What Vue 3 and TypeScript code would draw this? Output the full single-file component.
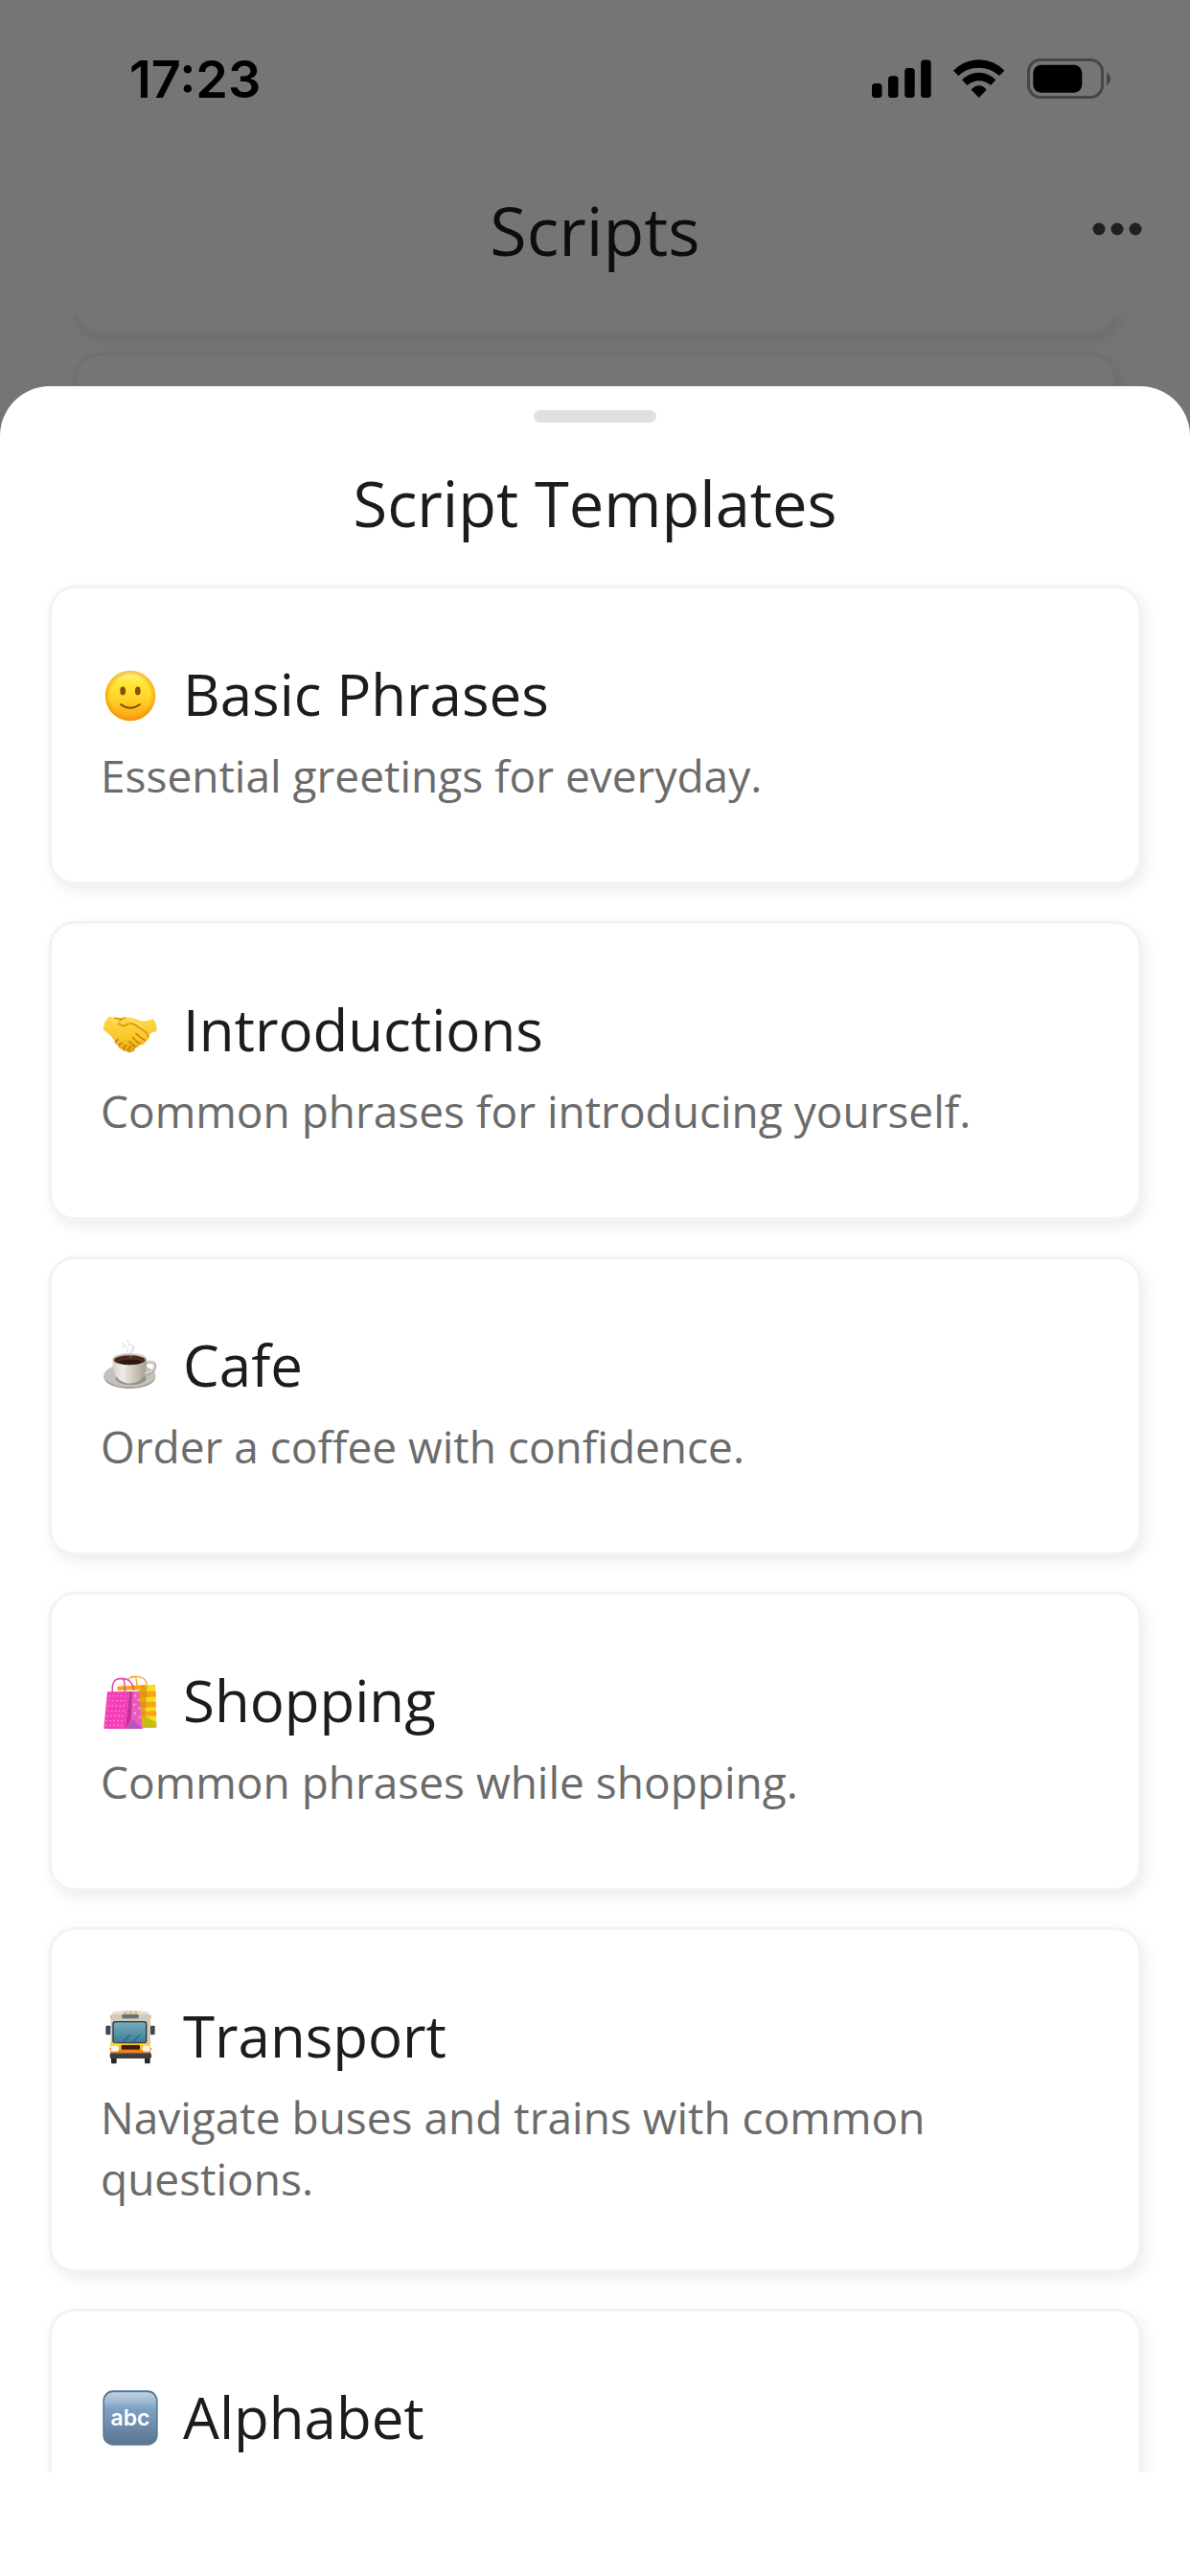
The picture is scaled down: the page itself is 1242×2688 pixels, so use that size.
<script setup lang="ts">
type IconName = 'smile' | 'handshake' | 'coffee' | 'bags' | 'bus' | 'abc'

interface ScriptTemplate {
  icon: IconName
  title: string
  description?: string
}

const templates: ScriptTemplate[] = [
  { icon: 'smile', title: 'Basic Phrases', description: 'Essential greetings for everyday.' },
  { icon: 'handshake', title: 'Introductions', description: 'Common phrases for introducing yourself.' },
  { icon: 'coffee', title: 'Cafe', description: 'Order a coffee with confidence.' },
  { icon: 'bags', title: 'Shopping', description: 'Common phrases while shopping.' },
  { icon: 'bus', title: 'Transport', description: 'Navigate buses and trains with common questions.' },
  { icon: 'abc', title: 'Alphabet' },
]
</script>

<template>
  <div class="screen">
    <div class="page">
      <header class="app-bar">
        <h1 class="app-title">Scripts</h1>
        <button class="more" type="button" aria-label="More options">
          <svg width="52" height="14" viewBox="0 0 52 14" fill="#49454f" aria-hidden="true">
            <circle cx="7" cy="7" r="6.5" />
            <circle cx="26" cy="7" r="6.5" />
            <circle cx="45" cy="7" r="6.5" />
          </svg>
        </button>
      </header>
      <div class="page-list">
        <div class="card page-card page-card-last"></div>
        <div class="card page-card"></div>
      </div>
    </div>

    <div class="scrim">
      <div class="status-bar">
        <span class="clock">17:23</span>
        <span class="indicators">
          <svg width="62" height="42" viewBox="908.5 61 62 42" aria-hidden="true">
            <rect x="908.5" y="87" width="10.5" height="15" rx="3.5" />
            <rect x="925.5" y="79.3" width="10.5" height="22.7" rx="3.5" />
            <rect x="942.7" y="71" width="10.5" height="31" rx="3.5" />
            <rect x="959.6" y="62.5" width="10.6" height="39.5" rx="3.5" />
          </svg>
          <svg width="54" height="42" viewBox="342 63 162 126" aria-hidden="true">
            <path d="M342 101Q376 67 422 67Q468 67 502 101L486 117Q458 92 422 92Q386 92 358 117Z" />
            <path d="M369 130Q392 107 422 107Q452 107 475 130L459 147Q443 133 422 133Q401 133 385 147Z" />
            <path d="M398 161Q408 148 422 148Q436 148 446 161L422 186Z" />
          </svg>
          <svg width="88" height="42" viewBox="1071 61 88 42" aria-hidden="true">
            <rect x="1072.5" y="62.5" width="77" height="39" rx="12.5" fill="none" stroke="#464646" stroke-width="3" />
            <rect x="1077.3" y="67.8" width="51" height="29" rx="8.5" />
            <path d="M1154 75.5Q1158 78 1158 82.2Q1158 86.5 1154 89Z" fill="#464646" />
          </svg>
        </span>
      </div>

      <section class="sheet" role="dialog" aria-labelledby="sheet-title">
        <div class="handle"></div>
        <h2 id="sheet-title" class="sheet-title">Script Templates</h2>
        <div class="template-list">
          <button v-for="item in templates" :key="item.title" class="card template-card" type="button">
            <span class="template-title">
              <svg v-if="item.icon === 'smile'" class="emoji" viewBox="0 0 60 60" aria-hidden="true">
                <defs>
                  <linearGradient id="face" x1="0" y1="0" x2="0" y2="1">
                    <stop offset="0" stop-color="#fff8a8" />
                    <stop offset=".22" stop-color="#ffe93c" />
                    <stop offset=".55" stop-color="#ffd527" />
                    <stop offset="1" stop-color="#fb9f12" />
                  </linearGradient>
                  <radialGradient id="rim">
                    <stop offset=".78" stop-color="#f08c00" stop-opacity="0" />
                    <stop offset="1" stop-color="#ee8800" stop-opacity=".6" />
                  </radialGradient>
                </defs>
                <circle cx="31" cy="32" r="26.2" fill="url(#face)" />
                <circle cx="31" cy="32" r="26.2" fill="url(#rim)" />
                <ellipse cx="23.2" cy="27" rx="2.9" ry="4.4" fill="#8a4f08" />
                <ellipse cx="38.8" cy="27" rx="2.9" ry="4.4" fill="#8a4f08" />
                <path d="M21 41Q31 48.5 41 41" fill="none" stroke="#8a4f08" stroke-width="2" stroke-linecap="round" />
              </svg>
              <svg v-else-if="item.icon === 'handshake'" class="emoji" viewBox="45 9 180 180" aria-hidden="true">
                <defs>
                  <linearGradient id="skin" x1="0" y1="0" x2="0" y2="1">
                    <stop offset="0" stop-color="#ffd94a" />
                    <stop offset=".6" stop-color="#fbc62c" />
                    <stop offset="1" stop-color="#e39d0e" />
                  </linearGradient>
                </defs>
                <path d="M70 60Q74 58 79 61Q95 69 113 62Q135 60 155 67Q180 80 201 69Q208 66 212 70Q221 82 221 101Q220 107 214 107Q205 107 196 119Q198 132 186 137Q181 149 168 147Q161 158 154 157Q152 171 141 170Q134 175 127 168Q115 170 113 161Q101 161 100 150Q89 147 89 135Q75 114 58 104Q52 101 53 92Q58 73 70 60Z" fill="url(#skin)" />
                <path d="M89 63Q97 67 110 66M106 83Q113 94 127 84Q139 78 151 84L179 103Q192 111 195 122M100 84Q103 68 122 63" fill="none" stroke="#d79a10" stroke-width="5" stroke-linecap="round" />
                <path d="M155 112Q170 127 184 133M145 124Q158 139 169 145M134 136Q146 148 154 155M91 139Q92 132 100 132M103 150Q105 142 113 142M117 162Q117 151 125 149M131 168Q133 155 141 153" fill="none" stroke="#bf7d08" stroke-width="4" stroke-linecap="round" />
                <path d="M74 70Q90 82 105 76M130 68Q154 74 176 91" fill="none" stroke="#ffe77a" stroke-width="4" stroke-linecap="round" opacity=".7" />
              </svg>
              <svg v-else-if="item.icon === 'coffee'" class="emoji" viewBox="45 39 180 180" aria-hidden="true">
                <defs>
                  <linearGradient id="cup" x1="0" y1="0" x2="1" y2="0">
                    <stop offset="0" stop-color="#d2cfc8" />
                    <stop offset=".3" stop-color="#efede8" />
                    <stop offset=".7" stop-color="#c4bfb5" />
                    <stop offset="1" stop-color="#a39d92" />
                  </linearGradient>
                </defs>
                <ellipse cx="136" cy="167" rx="81" ry="37" fill="#9f9b93" />
                <ellipse cx="136" cy="163" rx="81" ry="36" fill="#c4c1ba" />
                <ellipse cx="140" cy="172" rx="48" ry="21" fill="#98938a" />
                <path d="M182 124Q217 114 215 137Q211 158 178 159" fill="none" stroke="#aaa59c" stroke-width="9" />
                <path d="M183 123Q215 114 213 136Q210 154 178 157" fill="none" stroke="#dedbd5" stroke-width="5" />
                <path d="M82 113Q82 162 105 178Q120 188 136 188Q154 188 168 178Q190 162 190 113Z" fill="url(#cup)" />
                <ellipse cx="136" cy="112" rx="54" ry="19" fill="#cdc8bf" />
                <ellipse cx="136" cy="115" rx="49" ry="15" fill="#4b2a1b" />
                <ellipse cx="138" cy="121" rx="35" ry="8" fill="#2c160f" />
                <path d="M116 59Q110 68 121 70Q135 76 128 89M126 56Q139 53 134 67Q151 68 142 83Q136 91 139 108M113 76L124 69M147 67Q153 77 146 88" fill="none" stroke="#b9b9b9" stroke-width="3" stroke-linecap="round" opacity=".55" />
              </svg>
              <svg v-else-if="item.icon === 'bags'" class="emoji" viewBox="45 24 180 180" aria-hidden="true">
                <path d="M134 48Q137 40 149 40Q154 40 156 45L159 69M143 44Q153 37 172 43Q187 48 190 65" fill="none" stroke="#f7a23b" stroke-width="4" stroke-linecap="round" />
                <path d="M98 71L216 66L220 200L176 201L160 84L98 84Z" fill="#eee01c" />
                <path d="M98 71L178 67L182 78L98 84ZM165 87L218 86L218 104L166 105ZM167 120L218 119L219 136L169 137ZM172 149L219 148L220 163L175 165Z" fill="#f9a21d" />
                <path d="M178 67L191 66L184 165L175 175L164 90Z" fill="#d88a11" opacity=".65" />
                <path d="M184 165L220 184L220 200L176 201L175 175Z" fill="#c7ba19" />
                <path d="M66 88L136 87L122 207L55 203Z" fill="#f43fb8" />
                <path d="M136 87L165 87L177 205L122 207Z" fill="#ec59bf" />
                <path d="M136 87L144 87L140 175L122 207Z" fill="#c23198" />
                <path d="M144 175L122 207L177 205Z" fill="#b456bd" />
                <path d="M72 101H128M70 116H127M68 132H126M66 148H124M64 163H122M62 179H121M61 193H120" stroke="#ff9bdf" stroke-width="4" stroke-dasharray="4 8" />
                <path d="M151 101h5M161 114h5M148 128h5M164 139h5M150 155h5M165 168h5" stroke="#ffc1eb" stroke-width="5" />
                <path d="M83 98Q77 54 98 48Q116 44 119 54L122 98M99 48Q127 42 139 58Q148 68 149 82" fill="none" stroke="#dd4aa7" stroke-width="4.5" stroke-linecap="round" />
              </svg>
              <svg v-else-if="item.icon === 'bus'" class="emoji" viewBox="45 39 180 180" aria-hidden="true">
                <defs>
                  <linearGradient id="glass" x1="0" y1="0" x2="0" y2="1">
                    <stop offset="0" stop-color="#74acb9" />
                    <stop offset="1" stop-color="#3c7e98" />
                  </linearGradient>
                </defs>
                <rect x="78" y="192" width="17" height="25" rx="4" fill="#26272a" />
                <rect x="183" y="192" width="17" height="25" rx="4" fill="#26272a" />
                <path d="M85 56Q139 46 193 56L201 68V160H77V68Z" fill="#d3cbb8" />
                <path d="M85 56Q139 46 193 56L194 63H84Z" fill="#e6dfd0" />
                <path d="M119 57h8M135 56h8M151 57h8" stroke="#f79a22" stroke-width="5" />
                <path d="M77 65v9M201 65v9" stroke="#f4a54a" stroke-width="4" />
                <rect x="112" y="62" width="52" height="14" rx="3" fill="#66727a" />
                <path d="M76 102H64M202 102H214" stroke="#333" stroke-width="4" />
                <rect x="61" y="98" width="15" height="29" rx="4" fill="#43474d" />
                <rect x="201" y="98" width="14" height="29" rx="4" fill="#43474d" />
                <rect x="82" y="84" width="108" height="70" rx="9" fill="#27333c" />
                <rect x="86" y="88" width="100" height="63" rx="6" fill="url(#glass)" />
                <path d="M115 150L138 126M146 151L169 126" stroke="#23485b" stroke-width="3" />
                <path d="M77 151Q139 161 201 151V186H77Z" fill="#ffb51b" />
                <path d="M77 154Q139 163 201 154V162H77Z" fill="#ffd83a" />
                <path d="M77 174H201V186H77Z" fill="#f47f16" />
                <rect x="110" y="159" width="58" height="14" rx="2" fill="#38220f" />
                <rect x="77" y="162" width="25" height="17" rx="6" fill="#f5f5f0" />
                <rect x="176" y="162" width="25" height="17" rx="6" fill="#f5f5f0" />
                <path d="M76 167v8M202 167v8" stroke="#ff8e24" stroke-width="5" />
                <rect x="74" y="183" width="130" height="18" rx="5" fill="#3b3e43" />
                <path d="M78 185H200" stroke="#6b6e72" stroke-width="3" />
              </svg>
              <svg v-else class="emoji" viewBox="45 36 180 180" aria-hidden="true">
                <defs>
                  <linearGradient id="tile" x1="0" y1="0" x2="0" y2="1">
                    <stop offset="0" stop-color="#bfd2e0" />
                    <stop offset=".22" stop-color="#96b4cf" />
                    <stop offset=".3" stop-color="#7fa2c6" />
                    <stop offset=".55" stop-color="#7192b2" />
                    <stop offset="1" stop-color="#5b7690" />
                  </linearGradient>
                </defs>
                <rect x="52" y="43" width="172" height="172" rx="32" fill="#587a97" />
                <rect x="57" y="49" width="162" height="162" rx="27" fill="url(#tile)" />
                <text x="138" y="153" class="tile-text" text-anchor="middle">abc</text>
              </svg>
              {{ item.title }}
            </span>
            <span v-if="item.description" class="template-description">{{ item.description }}</span>
          </button>
        </div>
      </section>
    </div>
  </div>
</template>

<style>
body {
  margin: 0;
}
</style>

<style scoped>
.screen {
  display: grid;
  grid-template: minmax(0, 1fr) / minmax(0, 1fr);
  height: 100vh;
  overflow: hidden;
  background: #fff;
  color: #1d1b20;
  font-family: "Open Sans", "Noto Sans", sans-serif;
}

.page,
.scrim {
  grid-area: 1 / 1;
  display: flex;
  flex-direction: column;
  min-height: 0;
}

.app-bar {
  flex: none;
  box-sizing: border-box;
  display: grid;
  grid-template-columns: 1fr auto 1fr;
  align-items: center;
  height: 328px;
  padding: 152px 50px 0;
}

.app-title {
  grid-column: 2;
  margin: 0;
  font-size: 70px;
  line-height: 96px;
  font-weight: 400;
}

.more {
  justify-self: end;
  display: flex;
  padding: 20px 0;
  margin-bottom: 3px;
  border: 0;
  background: none;
}

.page-list {
  flex: 1;
  display: flex;
  flex-direction: column;
  justify-content: flex-start;
  gap: 19px;
  min-height: 0;
  padding: 0 77px;
  overflow: hidden;
}

.card {
  box-sizing: border-box;
  border: 3px solid #f3f3f3;
  border-radius: 27px;
  background: #fff;
  box-shadow: 4px 6px 16px rgba(0, 0, 0, 0.08);
}

.page-card {
  flex: none;
  height: 312px;
}

.page-card-last {
  margin-top: -291px;
}

.scrim {
  background: rgba(0, 0, 0, 0.54);
}

.status-bar {
  flex: none;
  box-sizing: border-box;
  display: flex;
  justify-content: space-between;
  height: 403px;
  padding: 50px 82px 0 135px;
  color: #000;
}

.clock {
  font-family: Inter, "Liberation Sans", sans-serif;
  font-size: 54px;
  line-height: 66px;
  font-weight: 600;
}

.indicators {
  display: flex;
  align-items: center;
  gap: 23px;
  height: 64px;
}

.sheet {
  flex: 1;
  display: flex;
  flex-direction: column;
  min-height: 0;
  padding: 25px 0 108px;
  border-radius: 52px 52px 0 0;
  background: #fff;
}

.handle {
  flex: none;
  align-self: center;
  width: 128px;
  height: 13px;
  border-radius: 7px;
  background: #e0e0e0;
}

.sheet-title {
  margin: 36px 0 0;
  text-align: center;
  font-size: 65px;
  line-height: 96px;
  font-weight: 400;
}

.template-list {
  flex: 1;
  display: flex;
  flex-direction: column;
  gap: 38px;
  min-height: 0;
  padding: 38px 51px 0;
  overflow: hidden;
}

.template-card {
  flex: none;
  display: flex;
  flex-direction: column;
  gap: 13px;
  min-height: 312px;
  padding: 70px 51px 63px;
  color: inherit;
  font-family: inherit;
  text-align: left;
}

.template-title {
  display: flex;
  align-items: center;
  gap: 26px;
  font-size: 60px;
  line-height: 80px;
}

.template-description {
  color: #6b6b6b;
  font-size: 46px;
  line-height: 64px;
}

.emoji {
  flex: none;
  width: 60px;
  height: 60px;
}

.tile-text {
  fill: #fff;
  font-family: Inter, "Liberation Sans", sans-serif;
  font-size: 69px;
  font-weight: 600;
}
</style>
